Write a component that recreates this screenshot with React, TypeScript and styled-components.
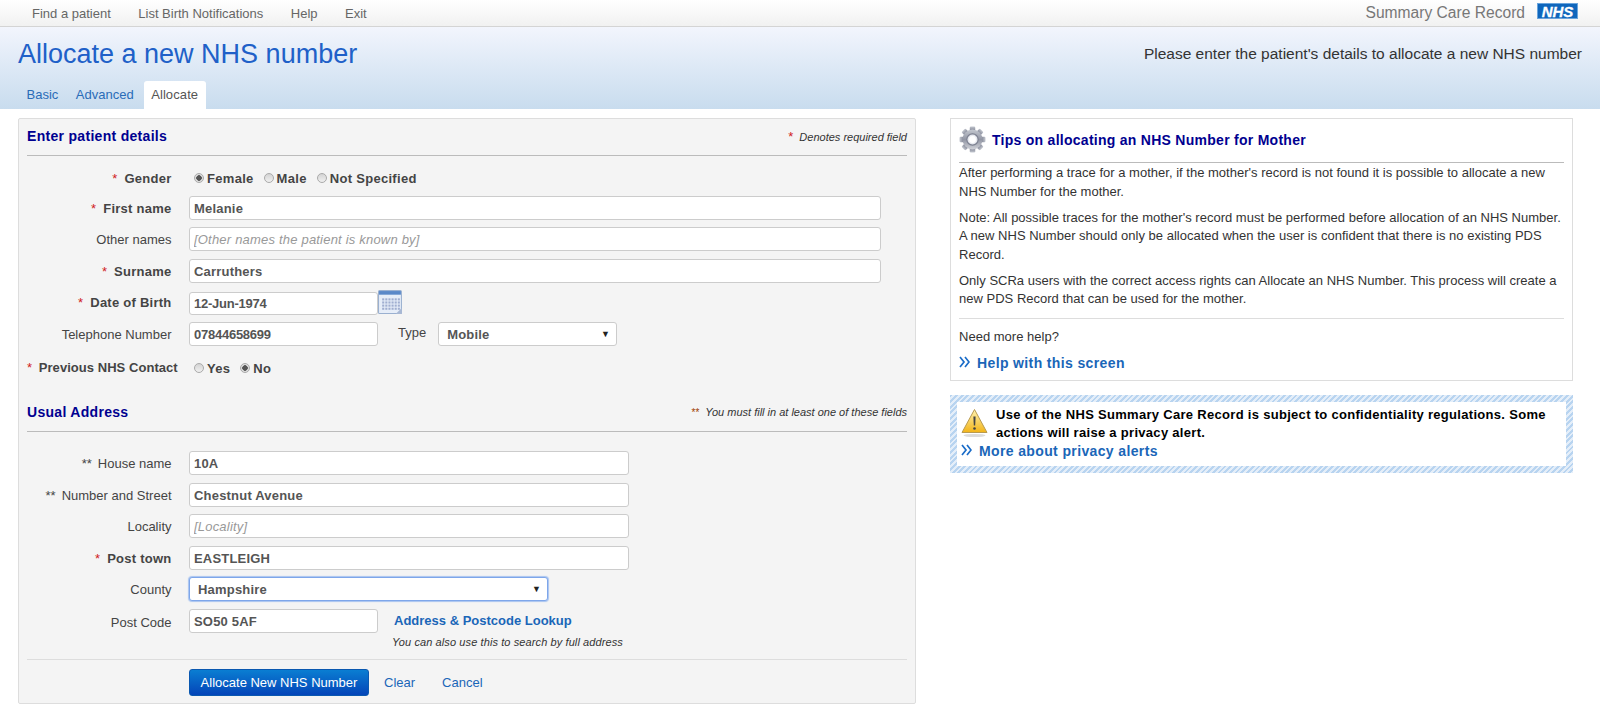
import React from "react";
import styled, { createGlobalStyle } from "styled-components";

const GlobalStyle = createGlobalStyle`
	html, body {
		margin: 0;
		padding: 0;
		background: #fff;
		font-family: "Liberation Sans", Arial, sans-serif;
		font-size: 13px;
		color: #333;
	}
`;

function ChevronsIcon() {
	return (
		<ChevronSvg width="11" height="12" viewBox="0 0 11 12" fill="none" stroke="#1a6cc8" strokeWidth="1.7">
			<path d="M1 1l4 5-4 5M6 1l4 5-4 5" />
		</ChevronSvg>
	);
}

function GearIcon() {
	const teeth = [0, 45, 90, 135, 180, 225, 270, 315];
	return (
		<svg width="27" height="27" viewBox="0 0 27 27">
			<defs>
				<linearGradient id="gearFill" x1="0" y1="0" x2="0" y2="1">
					<stop offset="0" stopColor="#c4c8d0" />
					<stop offset="0.5" stopColor="#9296a4" />
					<stop offset="1" stopColor="#d0d2d8" />
				</linearGradient>
			</defs>
			{teeth.map((angle) => (
				<rect key={angle} x="10.75" y="0.5" width="5.5" height="6" rx="1.2" fill="url(#gearFill)" transform={`rotate(${angle} 13.5 13.5)`} />
			))}
			<circle cx="13.5" cy="13.5" r="10" fill="url(#gearFill)" />
			<circle cx="13.5" cy="13.5" r="6.2" fill="#7c8090" />
			<circle cx="13.5" cy="13.5" r="5" fill="#e8eaf0" />
			<circle cx="13.5" cy="13.5" r="3.4" fill="#fff" />
		</svg>
	);
}

function WarningIcon() {
	return (
		<IconSlot>
			<svg width="27" height="30" viewBox="0 0 27 30">
				<defs>
					<linearGradient id="warnFill" x1="0" y1="0" x2="0" y2="1">
						<stop offset="0" stopColor="#fff2b0" />
						<stop offset="1" stopColor="#f2b418" />
					</linearGradient>
				</defs>
				<ellipse cx="13.5" cy="27.5" rx="11" ry="1.6" fill="#dcdcdc" />
				<path d="M13.5 1.5L26 24.5H1z" fill="url(#warnFill)" stroke="#b89a50" strokeWidth="1" strokeLinejoin="round" />
				<path d="M12.4 8.5h2.2l-.4 9h-1.4z" fill="#444" />
				<circle cx="13.5" cy="20.5" r="1.3" fill="#444" />
			</svg>
		</IconSlot>
	);
}

function CalendarIcon() {
	const cols = [4, 7, 10, 13, 16, 19];
	const rows = [8, 11, 14, 17];
	return (
		<CalendarSlot>
			<svg width="25" height="25" viewBox="0 0 24 24">
				<rect x="0.5" y="0.5" width="22" height="22" rx="1" fill="#e6edf8" stroke="#9ab0d0" />
				<rect x="1" y="1" width="21" height="3.5" fill="#5a88c8" />
				{rows.map((y) =>
					cols.map((x) => <rect key={`${x}-${y}`} x={x} y={y} width="2" height="2" fill="#a0aed0" />),
				)}
				<path d="M17 23l6-6v6z" fill="#a8b8d4" />
			</svg>
		</CalendarSlot>
	);
}

function Required({ double }: { double?: boolean }) {
	return <Star $double={double}>{double ? "**" : "*"}</Star>;
}

function RadioOption({ label, checked }: { label: string; checked?: boolean }) {
	return (
		<RadioLabel>
			<RadioDot $checked={checked} />
			{label}
		</RadioLabel>
	);
}

export default function App() {
	return (
		<>
			<GlobalStyle />
			<TopBar>
				<NavList>
					<NavLink>Find a patient</NavLink>
					<NavLink>List Birth Notifications</NavLink>
					<NavLink>Help</NavLink>
					<NavLink>Exit</NavLink>
				</NavList>
				<Brand>
					<BrandName>Summary Care Record</BrandName>
					<NhsLogo>NHS</NhsLogo>
				</Brand>
			</TopBar>
			<Header>
				<HeaderRow>
					<Title>Allocate a new NHS number</Title>
					<Subtitle>Please enter the patient's details to allocate a new NHS number</Subtitle>
				</HeaderRow>
				<Tabs>
					<Tab>Basic</Tab>
					<Tab>Advanced</Tab>
					<Tab $active>Allocate</Tab>
				</Tabs>
			</Header>
			<Main>
				<FormPanel>
					<SectionHeader>
						<SectionTitle>Enter patient details</SectionTitle>
						<SectionNote>
							<Required /> Denotes required field
						</SectionNote>
					</SectionHeader>
					<Rows $top={12}>
						<GenderRow>
							<FieldLabel $strong>
								<Required /> Gender
							</FieldLabel>
							<RadioGroup>
								<RadioOption label="Female" checked />
								<RadioOption label="Male" />
								<RadioOption label="Not Specified" />
							</RadioGroup>
						</GenderRow>
						<Row>
							<FieldLabel $strong>
								<Required /> First name
							</FieldLabel>
							<TextInput $width={692} defaultValue="Melanie" readOnly />
						</Row>
						<Row>
							<FieldLabel>Other names</FieldLabel>
							<TextInput $width={692} placeholder="[Other names the patient is known by]" readOnly />
						</Row>
						<Row>
							<FieldLabel $strong>
								<Required /> Surname
							</FieldLabel>
							<TextInput $width={692} defaultValue="Carruthers" readOnly />
						</Row>
						<Row>
							<FieldLabel $strong>
								<Required /> Date of Birth
							</FieldLabel>
							<DateInput $width={189} $digits defaultValue="12-Jun-1974" readOnly />
							<CalendarIcon />
						</Row>
						<Row>
							<FieldLabel>Telephone Number</FieldLabel>
							<TextInput $width={189} $digits defaultValue="07844658699" readOnly />
							<TypeLabel>Type</TypeLabel>
							<SelectBox $width={179}>
								Mobile
								<SelectArrow>▼</SelectArrow>
							</SelectBox>
						</Row>
						<PreviousContactRow>
							<WideLabel $strong>
								<Required /> Previous NHS Contact
							</WideLabel>
							<RadioGroup>
								<RadioOption label="Yes" />
								<RadioOption label="No" checked />
							</RadioGroup>
						</PreviousContactRow>
					</Rows>
					<AddressHeader>
						<SectionTitle>Usual Address</SectionTitle>
						<SectionNote>
							<Required double /> You must fill in at least one of these fields
						</SectionNote>
					</AddressHeader>
					<Rows $top={19}>
						<Row>
							<FieldLabel>
								<DoubleMark>**</DoubleMark>House name
							</FieldLabel>
							<TextInput $width={440} defaultValue="10A" readOnly />
						</Row>
						<Row>
							<FieldLabel>
								<DoubleMark>**</DoubleMark>Number and Street
							</FieldLabel>
							<TextInput $width={440} defaultValue="Chestnut Avenue" readOnly />
						</Row>
						<Row>
							<FieldLabel>Locality</FieldLabel>
							<TextInput $width={440} placeholder="[Locality]" readOnly />
						</Row>
						<Row>
							<FieldLabel $strong>
								<Required /> Post town
							</FieldLabel>
							<TextInput $width={440} defaultValue="EASTLEIGH" readOnly />
						</Row>
						<Row>
							<FieldLabel>County</FieldLabel>
							<SelectBox $width={359} $focused>
								Hampshire
								<SelectArrow>▼</SelectArrow>
							</SelectBox>
						</Row>
						<PostcodeRow>
							<FieldLabel>Post Code</FieldLabel>
							<TextInput $width={189} defaultValue="SO50 5AF" readOnly />
							<Lookup>
								<LookupLink>Address &amp; Postcode Lookup</LookupLink>
								<LookupHint>You can also use this to search by full address</LookupHint>
							</Lookup>
						</PostcodeRow>
					</Rows>
					<FormFooter>
						<PrimaryButton>Allocate New NHS Number</PrimaryButton>
						<FooterLink>Clear</FooterLink>
						<FooterLink>Cancel</FooterLink>
					</FormFooter>
				</FormPanel>
				<SideColumn>
					<TipsPanel>
						<TipsHeader>
							<GearIcon />
							<TipsTitle>Tips on allocating an NHS Number for Mother</TipsTitle>
						</TipsHeader>
						<TipsText>
							After performing a trace for a mother, if the mother's record is not found it is possible to allocate a new NHS
							Number for the mother.
						</TipsText>
						<TipsText>
							Note: All possible traces for the mother's record must be performed before allocation of an NHS Number. A new NHS
							Number should only be allocated when the user is confident that there is no existing PDS Record.
						</TipsText>
						<TipsText>
							Only SCRa users with the correct access rights can Allocate an NHS Number. This process will create a new PDS
							Record that can be used for the mother.
						</TipsText>
						<TipsDivider />
						<TipsText>Need more help?</TipsText>
						<MoreLink>
							<ChevronsIcon />
							Help with this screen
						</MoreLink>
					</TipsPanel>
					<PrivacyBox>
						<PrivacyInner>
							<PrivacyMessage>
								<WarningIcon />
								<PrivacyText>
									Use of the NHS Summary Care Record is subject to confidentiality regulations. Some actions will raise a privacy
									alert.
								</PrivacyText>
							</PrivacyMessage>
							<PrivacyLink>
								<ChevronsIcon />
								More about privacy alerts
							</PrivacyLink>
						</PrivacyInner>
					</PrivacyBox>
				</SideColumn>
			</Main>
		</>
	);
}

const TopBar = styled.div`
	display: flex;
	justify-content: space-between;
	align-items: center;
	height: 26px;
	padding: 0 22px 0 32px;
	background: linear-gradient(#fff, #f1f1f1);
	border-bottom: 1px solid #d4d4d4;
`;

const NavList = styled.nav`
	display: flex;
	gap: 27.5px;
`;

const NavLink = styled.a`
	font-size: 13px;
	color: #666;
`;

const Brand = styled.div`
	display: flex;
	align-items: center;
	gap: 12px;
`;

const BrandName = styled.span`
	font-size: 15.6px;
	color: #777;
`;

const NhsLogo = styled.span`
	width: 41px;
	height: 16px;
	margin-top: -5px;
	background: #0f66bc;
	border: 1px solid #6aa4dc;
	box-sizing: border-box;
	color: #fff;
	font-size: 15px;
	line-height: 15px;
	font-weight: bold;
	font-style: italic;
	text-align: center;
	-webkit-text-stroke: 0.3px #fff;
`;

const Header = styled.header`
	height: 82px;
	display: flex;
	flex-direction: column;
	background: linear-gradient(#f2f5fd, #c8dcee);
`;

const HeaderRow = styled.div`
	display: flex;
	justify-content: space-between;
	align-items: center;
	height: 54px;
	padding: 0 18px;
`;

const Title = styled.h1`
	margin: 0;
	font-size: 27px;
	font-weight: normal;
	color: #2060c8;
`;

const Subtitle = styled.p`
	margin: 0;
	font-size: 15.5px;
	color: #333;
`;

const Tabs = styled.div`
	display: flex;
	align-items: flex-end;
	height: 28px;
	padding-left: 19px;
`;

const Tab = styled.a<{ $active?: boolean }>`
	height: 28px;
	line-height: 28px;
	padding: 0 7.5px;
	margin-right: ${(p) => (p.$active ? 0 : "2.5px")};
	font-size: 13px;
	letter-spacing: ${(p) => (p.$active ? "0.1px" : "0")};
	color: ${(p) => (p.$active ? "#555" : "#2a6cb8")};
	background: ${(p) => (p.$active ? "#fff" : "transparent")};
	border-radius: 3px 3px 0 0;
`;

const Main = styled.main`
	display: flex;
	align-items: flex-start;
	gap: 34px;
	padding: 9px 27px 0 18px;
`;

const FormPanel = styled.section`
	width: 898px;
	height: 586px;
	flex: none;
	box-sizing: border-box;
	padding: 0 8px;
	background: #f4f4f4;
	border: 1px solid #ddd;
	border-radius: 2px;
`;

const SectionHeader = styled.div`
	display: flex;
	justify-content: space-between;
	align-items: center;
	height: 37px;
	padding-bottom: 2px;
	box-sizing: border-box;
	border-bottom: 1px solid #bbb;
`;

const AddressHeader = styled(SectionHeader)`
	margin-top: 25px;
	padding-bottom: 10px;
	box-sizing: content-box;
	height: 18px;
`;

const SectionTitle = styled.h2`
	margin: 0;
	font-size: 14px;
	font-weight: bold;
	letter-spacing: 0.3px;
	color: #000090;
`;

const SectionNote = styled.span`
	font-size: 11px;
	font-style: italic;
	color: #333;
`;

const Star = styled.span<{ $double?: boolean }>`
	color: ${(p) => (p.$double ? "#a04000" : "#d02020")};
	font-style: normal;
	font-weight: normal;
	font-size: ${(p) => (p.$double ? "10px" : "13px")};
	margin-right: 3px;
`;

const DoubleMark = styled.span`
	margin-right: 6px;
`;

const Rows = styled.div<{ $top: number }>`
	display: flex;
	flex-direction: column;
	gap: 7.5px;
	padding-top: ${(p) => p.$top}px;
`;

const Row = styled.div`
	display: flex;
	align-items: center;
	height: 24px;
`;

const RadioRow = styled(Row)`
	height: 20px;
`;

const GenderRow = styled(RadioRow)`
	margin: 0;
`;

const PreviousContactRow = styled(RadioRow)`
	margin-top: 5px;
`;

const PostcodeRow = styled(Row)`
	align-items: flex-start;
`;

const FieldLabel = styled.label<{ $strong?: boolean }>`
	width: 144.5px;
	margin: 2px 17.5px 0 0;
	flex: none;
	text-align: right;
	white-space: nowrap;
	font-size: 13px;
	font-weight: ${(p) => (p.$strong ? "bold" : "normal")};
	letter-spacing: ${(p) => (p.$strong ? "0.25px" : "0")};
	color: #444;
	line-height: 24px;
`;

const WideLabel = styled(FieldLabel)`
	width: 147px;
	margin: 0 15px 0 0;
	letter-spacing: 0.05px;
`;

const TextInput = styled.input<{ $width: number; $digits?: boolean }>`
	width: ${(p) => p.$width}px;
	height: 24px;
	box-sizing: border-box;
	padding: 1px 4px 0;
	flex: none;
	border: 1px solid #ccc;
	border-radius: 3px;
	background: #fff;
	font-family: inherit;
	font-size: 13px;
	font-weight: bold;
	letter-spacing: ${(p) => (p.$digits ? "-0.25px" : "0.2px")};
	color: #555;
	outline: none;

	&::placeholder {
		font-weight: normal;
		font-style: italic;
		letter-spacing: 0.2px;
		color: #999;
	}
`;

const DateInput = styled(TextInput)`
	height: 23px;
	margin-top: 2px;
`;

const CalendarSlot = styled.span`
	display: flex;
	flex: none;
	margin-top: 1px;
`;

const SelectBox = styled.div<{ $width: number; $focused?: boolean }>`
	position: relative;
	width: ${(p) => p.$width}px;
	height: 24px;
	box-sizing: border-box;
	padding-left: 8px;
	flex: none;
	line-height: 23px;
	background: #fff;
	border: 1px solid ${(p) => (p.$focused ? "#7ea6ea" : "#ccc")};
	box-shadow: ${(p) => (p.$focused ? "0 0 1px 1px #a8c4f0" : "none")};
	border-radius: 3px;
	font-size: 13px;
	font-weight: bold;
	letter-spacing: 0.2px;
	color: #555;
`;

const SelectArrow = styled.span`
	position: absolute;
	right: 6px;
	top: 0;
	font-size: 9px;
	color: #222;
`;

const TypeLabel = styled.span`
	margin: -3px 12px 0 20px;
	font-size: 13px;
	color: #444;
`;

const RadioGroup = styled.div`
	display: flex;
	margin-left: 5px;
	gap: 10px;
`;

const RadioLabel = styled.label`
	display: flex;
	align-items: center;
	gap: 3px;
	font-size: 13px;
	font-weight: bold;
	letter-spacing: 0.3px;
	color: #444;
`;

const RadioDot = styled.span<{ $checked?: boolean }>`
	width: 10px;
	height: 10px;
	box-sizing: border-box;
	border: 1px solid #aaa;
	border-radius: 50%;
	background: ${(p) => (p.$checked ? "radial-gradient(circle, #555 0 2.5px, #ddd 3px)" : "linear-gradient(#d4d4d4, #f0f0f0)")};
`;

const Lookup = styled.div`
	display: flex;
	flex-direction: column;
	margin-left: 16px;
`;

const LookupLink = styled.a`
	line-height: 24px;
	font-size: 13px;
	font-weight: bold;
	color: #1a66b8;
`;

const LookupHint = styled.span`
	margin: 2px 0 0 -2px;
	line-height: 14px;
	font-size: 11px;
	font-style: italic;
	letter-spacing: 0.1px;
	color: #333;
`;

const FormFooter = styled.div`
	display: flex;
	align-items: center;
	gap: 15px;
	margin-top: 26px;
	padding: 9px 0 0 162px;
	border-top: 1px solid #ddd;
`;

const PrimaryButton = styled.button`
	width: 180px;
	height: 27px;
	padding: 0;
	border: 1px solid #0a58b0;
	border-radius: 3px;
	background: linear-gradient(#0a7ed2, #0444b8);
	color: #fff;
	font-family: inherit;
	font-size: 13px;
`;

const FooterLink = styled.a`
	margin-right: 12px;
	font-size: 13px;
	color: #1a66b8;
`;

const SideColumn = styled.aside`
	width: 623px;
	flex: none;
	display: flex;
	flex-direction: column;
	gap: 14px;
`;

const TipsPanel = styled.section`
	height: 263px;
	box-sizing: border-box;
	padding: 0 8px;
	border: 1px solid #ddd;
`;

const TipsHeader = styled.div`
	display: flex;
	align-items: center;
	gap: 6px;
	height: 44px;
	margin-bottom: 1px;
	padding-bottom: 2px;
	box-sizing: border-box;
	border-bottom: 1px solid #bbb;
`;

const TipsTitle = styled.h3`
	margin: 0;
	font-size: 14px;
	font-weight: bold;
	letter-spacing: 0.27px;
	color: #000090;
`;

const TipsText = styled.p`
	margin: 0 0 7.5px;
	font-size: 13px;
	line-height: 18.5px;
	letter-spacing: 0.01px;
	color: #333;
`;

const TipsDivider = styled.hr`
	margin: 9px 0 9px;
	border: 0;
	border-top: 1px solid #ddd;
`;

const MoreLink = styled.a`
	display: flex;
	align-items: center;
	gap: 7px;
	margin-top: 9px;
	font-size: 14px;
	font-weight: bold;
	letter-spacing: 0.37px;
	color: #1a66b8;
`;

const ChevronSvg = styled.svg`
	flex: none;
	margin-top: -3px;
`;

const IconSlot = styled.span`
	display: flex;
	flex: none;
	margin-top: 2px;
`;

const PrivacyBox = styled.section`
	padding: 7px;
	background: repeating-linear-gradient(135deg, #b8d4f0 0 2px, #e4eef9 2px 4px);
`;

const PrivacyInner = styled.div`
	height: 64px;
	box-sizing: border-box;
	padding: 4px 4px 0;
	background: #fff;
`;

const PrivacyMessage = styled.div`
	display: flex;
	gap: 8px;
	height: 36px;
`;

const PrivacyText = styled.p`
	margin: 0;
	font-size: 13px;
	font-weight: bold;
	letter-spacing: 0.3px;
	line-height: 18px;
	color: #000;
`;

const PrivacyLink = styled(MoreLink)`
	margin-top: 1px;
	gap: 7px;
`;
